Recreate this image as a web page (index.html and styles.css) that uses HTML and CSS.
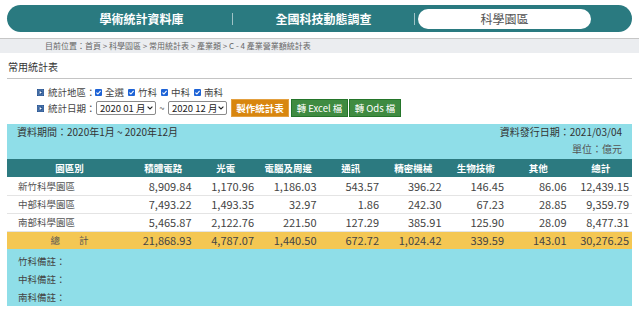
FILE: index.html
```html
<!DOCTYPE html>
<html lang="zh-Hant">
<head>
<meta charset="utf-8">
<title>產業營業額統計表</title>
<link rel="stylesheet" href="styles.css">
</head>
<body>
<nav class="nav">
  <a class="nav-item">學術統計資料庫</a>
  <span class="nav-sep"></span>
  <a class="nav-item">全國科技動態調查</a>
  <span class="nav-sep"></span>
  <a class="nav-item"><span class="nav-active">科學園區</span></a>
</nav>
<div class="crumb">目前位置：首頁 &gt; 科學園區 &gt; 常用統計表 &gt; 產業類 &gt; C - 4 產業營業額統計表</div>
<h1 class="title">常用統計表</h1>
<div class="filters">
  <div class="frow">
    <svg class="bullet" width="7" height="7" viewBox="0 0 7 7"><rect width="7" height="7" fill="#244f8c"/><rect x="1" y="1" width="5" height="5" fill="none" stroke="#7ea3d2" stroke-width="0.6"/><polygon points="2.6,2 4.9,3.5 2.6,5" fill="#fff"/></svg>
    <span class="flabel">統計地區：</span>
    <label class="chk"><svg width="7" height="7" viewBox="0 0 7 7"><rect width="7" height="7" rx="1" fill="#1e63d6"/><polyline points="1.4,3.6 2.9,5 5.6,1.9" fill="none" stroke="#fff" stroke-width="1.1"/></svg>全選</label>
    <label class="chk"><svg width="7" height="7" viewBox="0 0 7 7"><rect width="7" height="7" rx="1" fill="#1e63d6"/><polyline points="1.4,3.6 2.9,5 5.6,1.9" fill="none" stroke="#fff" stroke-width="1.1"/></svg>竹科</label>
    <label class="chk"><svg width="7" height="7" viewBox="0 0 7 7"><rect width="7" height="7" rx="1" fill="#1e63d6"/><polyline points="1.4,3.6 2.9,5 5.6,1.9" fill="none" stroke="#fff" stroke-width="1.1"/></svg>中科</label>
    <label class="chk"><svg width="7" height="7" viewBox="0 0 7 7"><rect width="7" height="7" rx="1" fill="#1e63d6"/><polyline points="1.4,3.6 2.9,5 5.6,1.9" fill="none" stroke="#fff" stroke-width="1.1"/></svg>南科</label>
  </div>
  <div class="frow">
    <svg class="bullet" width="7" height="7" viewBox="0 0 7 7"><rect width="7" height="7" fill="#244f8c"/><rect x="1" y="1" width="5" height="5" fill="none" stroke="#7ea3d2" stroke-width="0.6"/><polygon points="2.6,2 4.9,3.5 2.6,5" fill="#fff"/></svg>
    <span class="flabel">統計日期：</span>
    <span class="sel sel1"><span>2020 01 月</span><svg width="6" height="4" viewBox="0 0 6 4"><polyline points="0.6,0.6 3,3 5.4,0.6" fill="none" stroke="#222" stroke-width="1.1"/></svg></span>
    <span class="tilde">~</span>
    <span class="sel sel2"><span>2020 12 月</span><svg width="6" height="4" viewBox="0 0 6 4"><polyline points="0.6,0.6 3,3 5.4,0.6" fill="none" stroke="#222" stroke-width="1.1"/></svg></span>
    <button class="btn btn-orange">製作統計表</button>
    <button class="btn btn-green btn-excel">轉 Excel 檔</button>
    <button class="btn btn-green btn-ods">轉 Ods 檔</button>
  </div>
</div>
<section class="report">
  <div class="info">
    <div class="info-row"><span>資料期間：2020年1月 ~ 2020年12月</span><span>資料發行日期：2021/03/04</span></div>
    <div class="info-unit">單位：億元</div>
  </div>
  <table class="data">
    <colgroup><col class="c-name"><col><col><col><col><col><col><col><col></colgroup>
    <thead>
      <tr><th>園區別</th><th>積體電路</th><th>光電</th><th>電腦及周邊</th><th>通訊</th><th>精密機械</th><th>生物技術</th><th>其他</th><th>總計</th></tr>
    </thead>
    <tbody>
      <tr><td class="name">新竹科學園區</td><td>8,909.84</td><td>1,170.96</td><td>1,186.03</td><td>543.57</td><td>396.22</td><td>146.45</td><td>86.06</td><td>12,439.15</td></tr>
      <tr><td class="name">中部科學園區</td><td>7,493.22</td><td>1,493.35</td><td>32.97</td><td>1.86</td><td>242.30</td><td>67.23</td><td>28.85</td><td>9,359.79</td></tr>
      <tr><td class="name">南部科學園區</td><td>5,465.87</td><td>2,122.76</td><td>221.50</td><td>127.29</td><td>385.91</td><td>125.90</td><td>28.09</td><td>8,477.31</td></tr>
      <tr class="total"><td class="name">總　　計</td><td>21,868.93</td><td>4,787.07</td><td>1,440.50</td><td>672.72</td><td>1,024.42</td><td>339.59</td><td>143.01</td><td>30,276.25</td></tr>
    </tbody>
  </table>
  <div class="notes">
    <div>竹科備註：</div>
    <div>中科備註：</div>
    <div>南科備註：</div>
  </div>
</section>
</body>
</html>
```

FILE: styles.css
```css
* { box-sizing: border-box; }
body {
  margin: 0;
  font-family: "Noto Sans CJK TC", "Noto Sans", sans-serif;
  color: #333;
  background: #fff;
}
.nav {
  margin: 5px 7px 0;
  height: 27px;
  border-radius: 14px;
  background: #2a7a80;
  display: grid;
  grid-template-columns: 1fr 1px 1fr 1px 1fr;
  align-items: center;
  padding: 0 36px 0 44px;
}
.nav-item {
  display: flex;
  align-items: center;
  justify-content: center;
  height: 27px;
  color: #fff;
  font-weight: 700;
  font-size: 12px;
  line-height: 14px;
}
.nav-sep {
  height: 12px;
  background: rgba(255,255,255,0.55);
}
.nav-active {
  flex: 1;
  margin: 0 5px 0 3px;
  height: 20px;
  border-radius: 10px;
  background: #fff;
  color: #555;
  font-weight: 400;
  display: flex;
  align-items: center;
  justify-content: center;
}
.crumb {
  margin-top: 6px;
  border-top: 1px solid #c6c6c6;
  background: #ebedf0;
  height: 15px;
  padding-left: 45px;
  font-size: 8px;
  line-height: 14px;
  color: #666;
  white-space: nowrap;
}
.title {
  margin: 0 7px;
  padding: 7px 1px 4px;
  font-size: 10px;
  font-weight: 400;
  line-height: 14px;
  color: #333;
  border-bottom: 1px solid #c4c4c4;
}
.filters {
  padding: 6px 0 0 37px;
  font-size: 9.5px;
  color: #444;
}
.frow {
  display: flex;
  align-items: center;
  height: 14px;
  white-space: nowrap;
}
.frow + .frow { height: 18px; }
.bullet { margin-right: 4px; flex: none; }
.flabel { width: 47px; flex: none; white-space: nowrap; }
.chk {
  display: inline-flex;
  align-items: center;
  gap: 3px;
  margin-right: 4px;
}
.sel {
  display: inline-flex;
  align-items: center;
  justify-content: space-between;
  flex: none;
  height: 14px;
  border: 1px solid #8a8a8a;
  border-radius: 2px;
  padding: 0 2px 0 3px;
  font-size: 9.5px;
  line-height: 12px;
  color: #222;
  background: #fff;
  white-space: nowrap;
}
.sel1 { width: 60px; margin-left: 1px; }
.sel2 { width: 59px; }
.tilde { width: 12px; text-align: center; color: #555; }
.btn {
  height: 18px;
  padding: 0;
  margin-left: 2px;
  border: 1px solid;
  font-family: inherit;
  font-size: 9.5px;
  line-height: 14px;
  color: #fff;
  cursor: pointer;
  white-space: nowrap;
  flex: none;
}
.btn-orange {
  width: 58px;
  margin-left: 4px;
  background: #d8860f;
  border-color: #e3a040;
  font-weight: 700;
}
.btn-green {
  background: #3f8b41;
  border-color: #24752a;
}
.btn-excel { width: 57px; }
.btn-ods { width: 52px; margin-left: 1px; }
.report {
  margin: 7px 7px 0;
  background: #8fdee8;
  color: #333;
}
.info {
  padding: 0 10px 1px;
  font-size: 10px;
}
.info-row {
  display: flex;
  justify-content: space-between;
  line-height: 16px;
}
.info-unit {
  text-align: right;
  line-height: 18px;
  color: #555;
}
.data {
  width: 100%;
  border-collapse: collapse;
  table-layout: fixed;
}
.data col { width: 10%; }
.data col.c-name { width: 20%; }
.data th {
  height: 18px;
  padding: 0;
  background: #2c7a80;
  color: #fff;
  font-size: 9.5px;
  font-weight: 700;
  text-align: center;
}
.data td {
  height: 18px;
  padding: 0 3px 0 0;
  background: #fff;
  border-bottom: 1px solid #e4e4e4;
  text-align: right;
  font-size: 11px;
  color: #444;
  white-space: nowrap;
}
.data td.name {
  text-align: left;
  padding-left: 11px;
  font-size: 9.5px;
  color: #555;
}
.data tr.total td {
  background: #f4c753;
  border-bottom: none;
}
.data tr.total td.name {
  text-align: center;
  padding: 0;
}
.notes {
  padding: 3px 11px 0;
  font-size: 9.5px;
  color: #444;
}
.notes div { line-height: 18px; }
```
